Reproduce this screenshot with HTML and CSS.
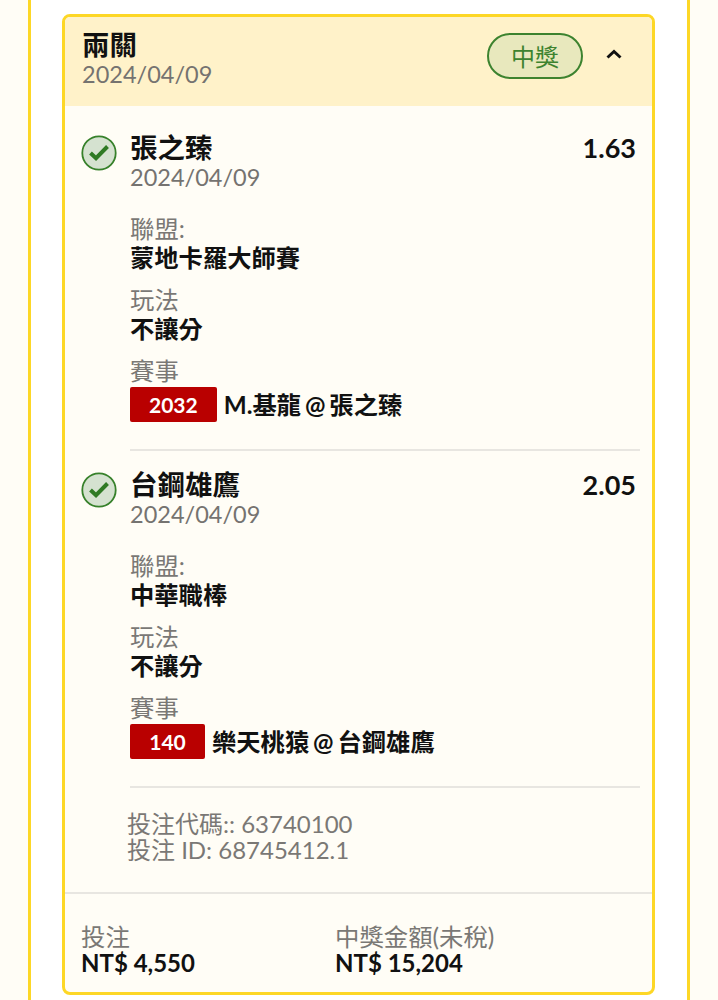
FILE: index.html
```html
<!DOCTYPE html>
<html lang="zh-Hant">
<head>
    <meta charset="UTF-8">
    <meta name="viewport" content="width=device-width, initial-scale=1.0">
    <title>投注紀錄</title>
    <link rel="stylesheet" href="styles.css">
</head>
<body>
    <div class="panel">
        <section class="bet-card">
            <header class="bet-header">
                <div class="bet-heading">
                    <h2 class="bet-title">兩關</h2>
                    <div class="date">2024/04/09</div>
                </div>
                <span class="status-pill">中獎</span>
                <svg class="chevron" width="18" height="12" viewBox="0 0 18 12">
                    <path d="M2.5 9.5 L9 3.5 L15.5 9.5" fill="none" stroke="#111" stroke-width="3"/>
                </svg>
            </header>

            <div class="legs">
                <div class="leg">
                    <svg class="check" width="36" height="36" viewBox="0 0 36 36">
                        <circle cx="18" cy="18" r="16.7" fill="#d5e2d0" stroke="#37812b" stroke-width="1.8"/>
                        <path d="M9.5 18 L15 23.2 L26.5 11.5" fill="none" stroke="#2f7a24" stroke-width="4"/>
                    </svg>
                    <div class="leg-body">
                        <div class="leg-top">
                            <h3 class="leg-name">張之臻</h3>
                            <span class="odds">1.63</span>
                        </div>
                        <div class="date">2024/04/09</div>
                        <div class="field">
                            <div class="field-label">聯盟:</div>
                            <div class="field-value">蒙地卡羅大師賽</div>
                        </div>
                        <div class="field">
                            <div class="field-label">玩法</div>
                            <div class="field-value">不讓分</div>
                        </div>
                        <div class="field">
                            <div class="field-label">賽事</div>
                            <div class="match">
                                <span class="match-code">2032</span>
                                <span class="field-value match-name">M.基龍 @ 張之臻</span>
                            </div>
                        </div>
                    </div>
                </div>

                <div class="leg">
                    <svg class="check" width="36" height="36" viewBox="0 0 36 36">
                        <circle cx="18" cy="18" r="16.7" fill="#d5e2d0" stroke="#37812b" stroke-width="1.8"/>
                        <path d="M9.5 18 L15 23.2 L26.5 11.5" fill="none" stroke="#2f7a24" stroke-width="4"/>
                    </svg>
                    <div class="leg-body">
                        <div class="leg-top">
                            <h3 class="leg-name">台鋼雄鷹</h3>
                            <span class="odds">2.05</span>
                        </div>
                        <div class="date">2024/04/09</div>
                        <div class="field">
                            <div class="field-label">聯盟:</div>
                            <div class="field-value">中華職棒</div>
                        </div>
                        <div class="field">
                            <div class="field-label">玩法</div>
                            <div class="field-value">不讓分</div>
                        </div>
                        <div class="field">
                            <div class="field-label">賽事</div>
                            <div class="match">
                                <span class="match-code">140</span>
                                <span class="field-value match-name">樂天桃猿 @ 台鋼雄鷹</span>
                            </div>
                        </div>
                    </div>
                </div>
            </div>

            <div class="bet-ids">
                <div>投注代碼:: 63740100</div>
                <div>投注 ID: 68745412.1</div>
            </div>

            <footer class="bet-footer">
                <div class="total">
                    <div class="total-label">投注</div>
                    <div class="total-value">NT$ 4,550</div>
                </div>
                <div class="total">
                    <div class="total-label">中獎金額(未稅)</div>
                    <div class="total-value">NT$ 15,204</div>
                </div>
            </footer>
        </section>
    </div>
</body>
</html>
```

FILE: styles.css
```css
* {
    box-sizing: border-box;
}

html, body {
    height: 1000px;
    overflow: hidden;
}

body {
    margin: 0;
    padding: 0 28px;
    background-color: #fffdf6;
    color: #111;
    font-family: Lato, "Noto Sans CJK TC", sans-serif;
    font-size: 24px;
}

.panel {
    height: 1000px;
    padding: 14px 32px 0 31px;
    background-color: #fff;
    border-left: 3px solid #fdd726;
    border-right: 3px solid #fdd726;
}

.bet-card {
    height: 981px;
    background-color: #fffdf6;
    border: 3px solid #fdd726;
    border-radius: 8px;
    overflow: hidden;
}

.bet-header {
    display: flex;
    align-items: center;
    height: 89px;
    padding: 0 29px 0 17px;
    background-color: #fff2c9;
}

.bet-heading {
    flex: 1;
    margin-bottom: 7px;
}

.bet-title {
    margin: 0;
    font-size: 27.5px;
    line-height: 32px;
    font-weight: 700;
}

.date {
    color: #757370;
    font-size: 23.5px;
    line-height: 27px;
}

.status-pill {
    display: flex;
    align-items: center;
    justify-content: center;
    width: 96px;
    height: 46px;
    margin-right: 22px;
    margin-bottom: 12px;
    background-color: #e8e8bd;
    border: 2px solid #3d832f;
    border-radius: 23px;
    color: #3d832f;
    font-size: 24px;
}

.chevron {
    margin-top: -16px;
}

.legs {
    padding: 26px 12px 0 16px;
}

.leg {
    display: flex;
    gap: 13px;
}

.leg + .leg {
    margin-top: 18px;
}

.check {
    flex: none;
    margin-top: 3px;
}

.leg-body {
    flex: 1;
    padding-bottom: 27px;
    border-bottom: 2px solid #e8e6e1;
}

.leg-top {
    display: flex;
    justify-content: space-between;
    padding-right: 4px;
}

.leg-name {
    margin: 0;
    font-size: 27.5px;
    line-height: 32px;
    font-weight: 700;
}

.odds {
    font-size: 27px;
    line-height: 32px;
    font-weight: 700;
}

.field {
    margin-top: 13px;
}

.leg-body > .date + .field {
    margin-top: 24px;
}

.field-label {
    color: #7a7875;
    font-size: 24.4px;
    line-height: 28px;
}

.field-value {
    font-size: 24.3px;
    font-weight: 700;
    line-height: 30px;
}

.match {
    display: flex;
    align-items: center;
    gap: 7px;
    margin-top: 2px;
}

.match-code {
    min-width: 75px;
    height: 35px;
    padding: 0 19px;
    background-color: #b90000;
    border-radius: 2px;
    color: #fff;
    font-size: 21px;
    font-weight: 700;
    line-height: 36px;
    text-align: center;
}

.match-name {
    word-spacing: -2px;
}

.bet-ids {
    padding: 23px 0 29px 62px;
    color: #7a7875;
    line-height: 26px;
}

.bet-footer {
    display: flex;
    padding: 30px 16px 0;
    border-top: 2px solid #e8e6e1;
}

.total {
    width: 254px;
}

.total-label {
    color: #7a7875;
    font-size: 24.4px;
    line-height: 26px;
}

.total-value {
    font-weight: 700;
    line-height: 26px;
}
```
